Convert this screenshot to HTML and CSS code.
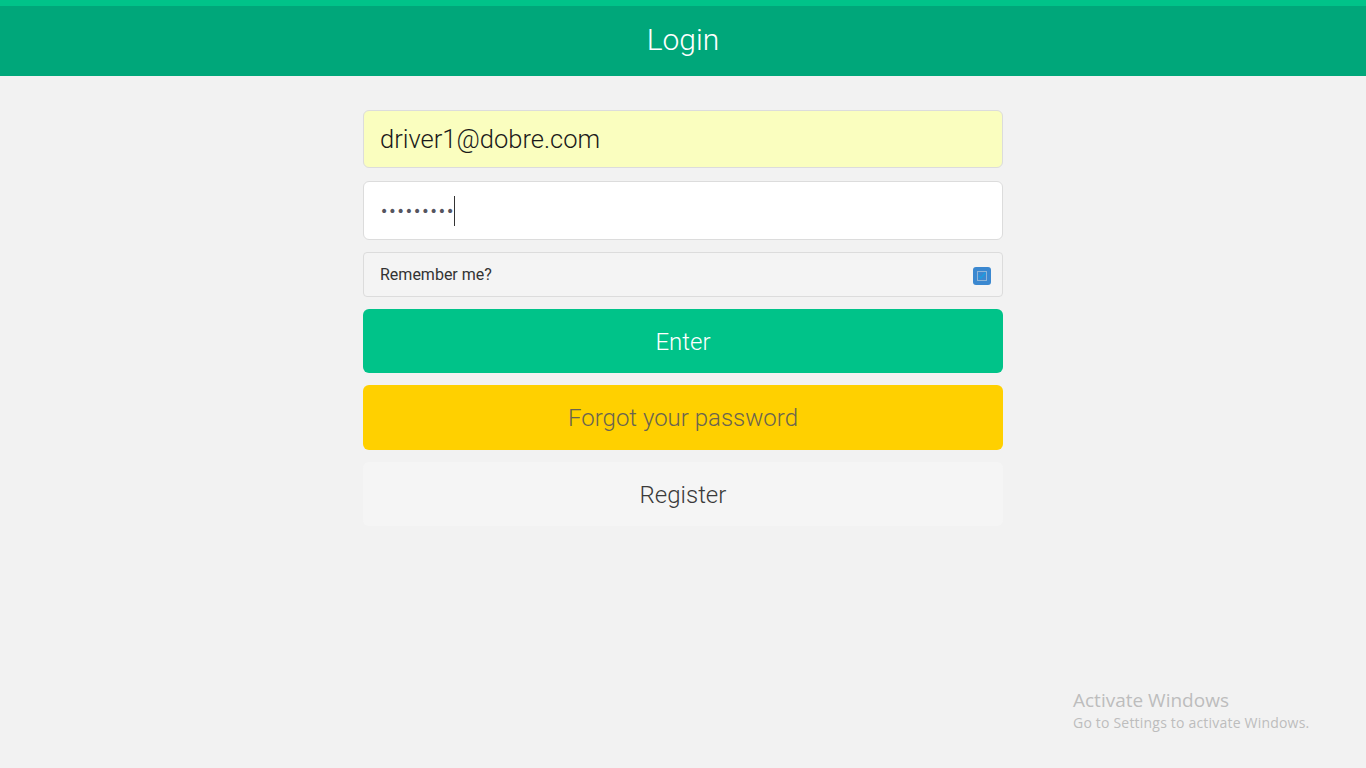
FILE: index.html
```html
<!DOCTYPE html>
<html>
<head>
<meta charset="utf-8">
<title>Login</title>
<link rel="stylesheet" href="styles.css">
</head>
<body>
<header class="topbar">
  <div class="topbar-strip"></div>
  <h1 class="topbar-title">Login</h1>
</header>
<main class="login">
  <form class="login-form">
    <div class="field field-email">driver1@dobre.com</div>
    <div class="field field-password"><span class="dots">•••••••••</span><span class="caret"></span></div>
    <label class="remember">
      <span class="remember-text">Remember me?</span>
      <span class="checkbox">
        <svg width="18" height="18" viewBox="0 0 18 18">
          <rect x="0" y="0" width="18" height="18" rx="3" fill="#3b88d0"/>
          <rect x="4.5" y="4.5" width="9" height="9" fill="none" stroke="#8fb5d8" stroke-width="1"/>
          <path d="M6 9 L8 11 L12.5 5.5" fill="none" stroke="#1a9fe0" stroke-width="1.3"/>
        </svg>
      </span>
    </label>
    <button type="button" class="btn btn-enter">Enter</button>
    <button type="button" class="btn btn-forgot">Forgot your password</button>
    <button type="button" class="btn btn-register">Register</button>
  </form>
</main>
<div class="activate">
  <div class="activate-title">Activate Windows</div>
  <div class="activate-sub">Go to Settings to activate Windows.</div>
</div>
</body>
</html>
```

FILE: styles.css
```css
html, body {
  margin: 0;
  padding: 0;
  height: 100%;
}
body {
  background: #f2f2f2;
  font-family: Roboto, "Liberation Sans", sans-serif;
  position: relative;
  overflow: hidden;
}
.topbar {
  background: #00a77a;
  height: 76px;
  display: flex;
  flex-direction: column;
}
.topbar-strip {
  height: 6px;
  background: #00c389;
}
.topbar-title {
  margin: 0;
  flex: 1;
  display: flex;
  align-items: center;
  justify-content: center;
  color: #ffffff;
  font-weight: 300;
  font-size: 30px;
  padding-bottom: 3px;
}
.login {
  display: flex;
  justify-content: center;
  padding-top: 34px;
}
.login-form {
  width: 640px;
  display: flex;
  flex-direction: column;
}
.field {
  box-sizing: border-box;
  border: 1px solid #dcdcdc;
  border-radius: 6px;
  display: flex;
  align-items: center;
  padding-left: 16px;
  color: #1a1a1a;
}
.field-email {
  height: 58px;
  background: #fafebf;
  font-size: 25.5px;
  font-weight: 300;
  margin-bottom: 13px;
}
.field-password {
  height: 59px;
  background: #ffffff;
  margin-bottom: 12px;
}
.dots {
  color: #55555f;
  font-size: 14px;
  letter-spacing: 0;
  font-family: "DejaVu Sans", sans-serif;
}
.caret {
  display: inline-block;
  width: 1px;
  height: 30px;
  background: #333;
  margin-left: 0;
}
.remember {
  box-sizing: border-box;
  height: 45px;
  background: #f4f4f4;
  border: 1px solid #dcdcdc;
  border-radius: 4px;
  display: flex;
  align-items: center;
  justify-content: space-between;
  padding: 0 11px 0 16px;
  margin-bottom: 12px;
}
.remember-text {
  font-size: 16px;
  color: #333;
}
.checkbox {
  display: flex;
  padding-top: 3px;
}
.btn {
  border: none;
  border-radius: 6px;
  height: 64px;
  font-family: Roboto, "Liberation Sans", sans-serif;
  font-weight: 300;
  font-size: 24px;
  padding: 2px 0 0 0;
  margin: 0 0 12px 0;
  cursor: pointer;
}
.btn-enter {
  background: #00c389;
  color: #ffffff;
}
.btn-forgot {
  height: 65px;
  background: #ffd000;
  color: #6a6450;
  padding-top: 0;
}
.btn-register {
  background: #f5f5f5;
  color: #3a3a3a;
}
.activate {
  position: absolute;
  left: 1073px;
  top: 688px;
  color: #bdbdbd;
  font-family: "Open Sans", "Noto Sans", sans-serif;
}
.activate-title {
  font-size: 19px;
  line-height: 24px;
}
.activate-sub {
  font-size: 14px;
  line-height: 21px;
  letter-spacing: 0.2px;
}
```
